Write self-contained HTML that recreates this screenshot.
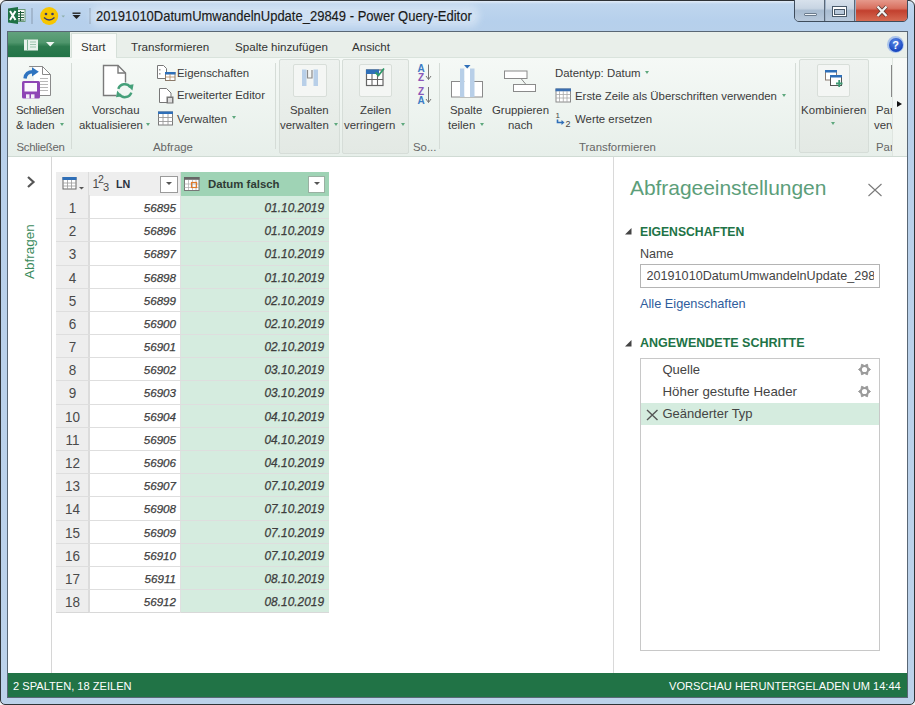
<!DOCTYPE html>
<html><head><meta charset="utf-8">
<style>
*{box-sizing:border-box;margin:0;padding:0}
html,body{width:915px;height:705px;overflow:hidden;background:#f4f4f4}
body{position:relative;font-family:"Liberation Sans",sans-serif;color:#444}
.a{position:absolute;white-space:nowrap}
#frame{left:0;top:0;width:915px;height:705px;border:1px solid #2f3337;border-radius:6px 6px 5px 5px;
 background:linear-gradient(#e2ecf7 0,#bfd6ee 3px,#b6d0ec 20px,#b8d0ea 40px,#bcd2ea 100%)}
#client{left:7px;top:31px;width:901px;height:667px;border:1px solid #596775;background:#fff}
.title{font-size:13px;color:#1a1a1a;left:96px;top:8.5px;line-height:16px;transform:scaleY(1.12);transform-origin:0 12.7px;-webkit-text-stroke:0.15px #1a1a1a}
.tab{font-size:11.6px;color:#333;top:40px}
.rt{font-size:11.4px;color:#3b3b3b;line-height:15px}
.gl{font-size:11.4px;color:#666;top:141px}
.sep{width:1px;background:#d5dcd7}
.dd{width:0;height:0;border-left:2.5px solid transparent;border-right:2.5px solid transparent;border-top:3px solid #5ea87d}
.gbox{border:1px solid #d6ddd8;border-radius:2px;background:linear-gradient(#eef2ef,#e3e9e4)}
.ibtn{border:1px solid #d8ded9;background:#f4f6f4;border-radius:2px}
.rn{font-size:13.5px;color:#4a4a4a;width:33px;text-align:center;left:56px;line-height:16px;transform:scaleY(1.1);transform-origin:0 12.5px}
.ln{font-size:11.6px;font-style:italic;color:#3d3d3d;line-height:14px;-webkit-text-stroke:0.25px #3d3d3d}
.dt{font-size:11.9px}
.hl{left:56px;width:272.5px;height:1px;background:#dedede}
.status{font-size:11.1px;color:#fff;top:680px}
</style></head><body>
<div id="frame" class="a"></div>
<!-- title bar -->
<svg class="a" style="left:0;top:0" width="100" height="30" viewBox="0 0 100 30">
 <rect x="16.5" y="9.5" width="8.5" height="12" fill="#f3f8f3" stroke="#6a9a7a"/>
 <path d="M18 12.5H24M18 15H24M18 17.5H24M18 20H24M20.5 11V21" stroke="#1f5c3a" stroke-width="1"/>
 <path d="M8 8.5L18 7V24L8 22.5Z" fill="#1e7145"/>
 <path d="M10 11L15.5 20M15.5 11L10 20" stroke="#fff" stroke-width="2"/>
 <rect x="31.5" y="8" width="1" height="16" fill="#8a9bb0"/>
 <circle cx="49.2" cy="16" r="9" fill="#f7c600"/>
 <circle cx="46" cy="14" r="1.3" fill="#3a3a6a"/><circle cx="52.5" cy="14" r="1.3" fill="#3a3a6a"/>
 <path d="M44 17.5Q49.2 22.5 54.5 17.5" fill="none" stroke="#3a3a6a" stroke-width="1.3"/>
 <path d="M61.5 15.5H65L63.2 17.5Z" fill="#8fb0a8"/>
 <rect x="72.5" y="12.5" width="8" height="1.4" fill="#222"/>
 <path d="M72.5 15H80.5L76.5 19Z" fill="#222"/>
 <rect x="89.5" y="8" width="1" height="16" fill="#8a9bb0"/>
</svg>
<div class="a" style="left:94px;top:9px;width:382px;height:14px;background:rgba(222,234,247,0.6);box-shadow:0 0 6px 4px rgba(222,234,247,0.6);border-radius:7px"></div>
<div class="a title">20191010DatumUmwandelnUpdate_29849 - Power Query-Editor</div>


<!-- window buttons -->
<div class="a" style="left:794px;top:-3px;width:114px;height:25px;border:1px solid #3e4c5c;border-radius:0 0 5px 5px;overflow:hidden;background:#9fb2c8">
 <div class="a" style="left:0;top:0;width:30px;height:23px;background:linear-gradient(#dbe4ee 0,#c8d5e3 45%,#a9bcd1 55%,#b8c9dc 100%);border-right:1px solid #5a6878"></div>
 <div class="a" style="left:31px;top:0;width:29px;height:23px;background:linear-gradient(#dbe4ee 0,#c8d5e3 45%,#a9bcd1 55%,#b8c9dc 100%);border-right:1px solid #5a6878"></div>
 <div class="a" style="left:61px;top:0;width:52px;height:23px;background:linear-gradient(#e9a396 0,#d8705f 45%,#c2402e 55%,#d66a52 100%)"></div>
</div>
<div class="a" style="left:804px;top:13px;width:13px;height:3px;background:#eef2f6;border:1px solid #6c7c8e;border-radius:1px"></div>
<div class="a" style="left:832px;top:6px;width:15px;height:11px;border:1px solid #4a5a6a;background:#fff"></div>
<div class="a" style="left:834px;top:9px;width:11px;height:6px;border:1px solid #4a5a6a;background:#b8c8da"></div>
<svg class="a" style="left:873px;top:3px" width="18" height="17"><path d="M4.5 3.5L13.5 13M13.5 3.5L4.5 13" stroke="#5a3a34" stroke-width="3.8"/><path d="M4.5 3.5L13.5 13M13.5 3.5L4.5 13" stroke="#f4f4f4" stroke-width="2.3"/></svg>

<div id="client" class="a"></div>
<!-- tab bar -->
<div class="a" style="left:8px;top:32px;width:899px;height:25px;background:#e9efea"></div>
<div class="a" style="left:8px;top:32px;width:62px;height:24.5px;background:linear-gradient(#62a27d 0,#4f966c 42%,#2d7b4f 58%,#237447 100%)"></div>
<div class="a" style="left:71px;top:33px;width:46px;height:25px;background:#f8faf8;border:1px solid #d6e0d9;border-bottom:none"></div>
<svg class="a" style="left:8px;top:32px" width="62" height="24"><rect x="16" y="7.5" width="14" height="11" fill="#e8f2ec"/><path d="M19.5 8V18" stroke="#7fb396" stroke-width="1"/><path d="M22 10H28M22 12.5H28M22 15H28" stroke="#9cc5ae" stroke-width="1"/><path d="M38 10H46.5L42.25 14.5Z" fill="#eef6f1"/></svg>
<div class="a tab" style="left:81px">Start</div>
<div class="a tab" style="left:131px">Transformieren</div>
<div class="a tab" style="left:235px">Spalte hinzufügen</div>
<div class="a tab" style="left:352px">Ansicht</div>
<div class="a" style="left:887px;top:36px;width:17px;height:17px;border-radius:50%;background:#a9c3ea"></div><div class="a" style="left:888.5px;top:37.5px;width:14px;height:14px;border-radius:50%;background:radial-gradient(circle at 45% 30%,#5a8ae8,#1a48c0 70%);color:#fff;font-size:11px;font-weight:bold;text-align:center;line-height:14px">?</div>

<!-- ribbon -->
<div class="a" style="left:8px;top:57px;width:899px;height:99.5px;background:linear-gradient(#f5f9f6,#e7efea);border-top:1px solid #d9e3dc;border-bottom:1px solid #d0dbd4"></div>


<div class="a" style="left:72px;top:56px;width:44px;height:3px;background:#f8faf8"></div>
<!-- ribbon contents -->
<div class="a sep" style="left:71px;top:63px;height:86px"></div>
<div class="a sep" style="left:275px;top:63px;height:86px"></div>
<div class="a sep" style="left:439px;top:63px;height:86px"></div>
<div class="a sep" style="left:795px;top:63px;height:86px"></div>
<div class="a gbox" style="left:279px;top:59px;width:61px;height:95px"></div>
<div class="a gbox" style="left:342px;top:59px;width:67px;height:95px"></div>
<div class="a gbox" style="left:799px;top:59px;width:70px;height:94px"></div>
<div class="a ibtn" style="left:293px;top:64px;width:34px;height:33px"></div>
<div class="a ibtn" style="left:359px;top:64px;width:33px;height:33px"></div>
<div class="a ibtn" style="left:817px;top:64px;width:33px;height:33px"></div>

<div class="a rt" style="left:16px;top:103px;letter-spacing:-0.3px">Schließen</div>
<div class="a rt" style="left:16px;top:118px">&amp; laden</div>
<div class="a dd" style="left:60px;top:123px"></div>
<div class="a gl" style="left:16.5px;letter-spacing:-0.3px">Schließen</div>

<div class="a rt" style="left:92px;top:103px">Vorschau</div>
<div class="a rt" style="left:79px;top:118px">aktualisieren</div>
<div class="a dd" style="left:146px;top:123px"></div>
<div class="a rt" style="left:177px;top:65.5px">Eigenschaften</div>
<div class="a rt" style="left:177px;top:88px">Erweiterter Editor</div>
<div class="a rt" style="left:177px;top:111.5px">Verwalten</div>
<div class="a dd" style="left:232px;top:116px"></div>
<div class="a gl" style="left:153px">Abfrage</div>

<div class="a rt" style="left:290px;top:103px">Spalten</div>
<div class="a rt" style="left:280px;top:118px">verwalten</div>
<div class="a dd" style="left:334px;top:123px"></div>
<div class="a rt" style="left:360px;top:103px">Zeilen</div>
<div class="a rt" style="left:344px;top:118px">verringern</div>
<div class="a dd" style="left:401px;top:123px"></div>
<div class="a gl" style="left:413px">So...</div>

<div class="a rt" style="left:450px;top:103px">Spalte</div>
<div class="a rt" style="left:448px;top:118px">teilen</div>
<div class="a dd" style="left:480px;top:123px"></div>
<div class="a rt" style="left:492px;top:103px">Gruppieren</div>
<div class="a rt" style="left:508px;top:118px">nach</div>
<div class="a rt" style="left:555px;top:66px">Datentyp: Datum</div>
<div class="a dd" style="left:645px;top:71px"></div>
<div class="a rt" style="left:575px;top:88.5px">Erste Zeile als Überschriften verwenden</div>
<div class="a dd" style="left:782px;top:94px"></div>
<div class="a rt" style="left:575px;top:111.5px">Werte ersetzen</div>
<div class="a gl" style="left:579px">Transformieren</div>

<div class="a rt" style="left:801px;top:103px;letter-spacing:0.15px">Kombinieren</div>
<div class="a dd" style="left:831px;top:122px"></div>
<div class="a" style="left:873px;top:57px;width:19px;height:99px;overflow:hidden">
 <div class="a rt" style="left:3px;top:46px">Par</div>
 <div class="a rt" style="left:1px;top:61px">verwalten</div>
 <div class="a gl" style="left:3px;top:84px">Par</div>
 <div class="a" style="left:18px;top:8px;width:2px;height:32px;border-left:1px solid #888"></div>
</div>
<div class="a" style="left:892px;top:58px;width:15px;height:98px;background:linear-gradient(#f8faf8,#eef3ef);border-left:1px solid #dfe5e0"></div>
<div class="a" style="left:897px;top:101px;width:0;height:0;border-top:3.5px solid transparent;border-bottom:3.5px solid transparent;border-left:5px solid #111"></div>


<svg class="a" style="left:0;top:0" width="915" height="705" viewBox="0 0 915 705">
 <!-- Schliessen icon -->
 <path d="M29.5 66.5H42.5L50.5 74.5V95.5H29.5Z" fill="#fff" stroke="#8a8a8a"/>
 <rect x="28" y="67" width="6" height="14" fill="#f1f5f1"/>
 <path d="M42.5 66.5V74.5H50.5" fill="none" stroke="#8a8a8a"/>
 <g stroke="#b8b8b8"><path d="M40 78.5H48M40 81.5H48M40 84.5H48M40 87.5H48M40 90.5H48"/></g>
 <rect x="22" y="81" width="18" height="17.5" rx="1.5" fill="#8e44b5"/>
 <rect x="24.5" y="83" width="12.5" height="8.5" fill="#fbf8fd"/>
 <rect x="26" y="94.3" width="3.5" height="4.2" fill="#f4eef8"/><rect x="31" y="94.3" width="3.5" height="4.2" fill="#f4eef8"/>
 <path d="M29.5 66.5H42.5" stroke="#8a8a8a"/>
 <path d="M25 78.5C25.5 74 28.5 71.8 33 71.8" fill="none" stroke="#2f74c0" stroke-width="3.4"/>
 <path d="M32 67.2L38.8 71.8L32 76.4Z" fill="#2f74c0"/>
 <!-- Vorschau icon -->
 <path d="M103.5 65.5H118L125.5 73V83C120 83 116.5 88 116.5 95.5H103.5Z" fill="#fff"/>
 <path d="M116.5 95.5H103.5V65.5H118L125.5 73V82.5" fill="none" stroke="#7a7a7a" stroke-width="1.4"/>
 <path d="M118 65.5V73H125.5" fill="none" stroke="#7a7a7a" stroke-width="1.4"/>
 <path d="M118.3 88.8A6.8 6.8 0 0 1 130.3 87.2" fill="none" stroke="#45a07a" stroke-width="2.5"/>
 <path d="M127.2 85.2L133.6 84.2L132.4 90.6Z" fill="#45a07a"/>
 <path d="M131.3 92.6A6.8 6.8 0 0 1 119.3 94.2" fill="none" stroke="#45a07a" stroke-width="2.5"/>
 <path d="M122.4 96.2L116 97.2L117.2 90.8Z" fill="#45a07a"/>
 <!-- Eigenschaften icon -->
 <path d="M157.5 65.5H163.5L166.5 68.5V78.5H157.5Z" fill="#fff" stroke="#777"/>
 <g fill="#999"><rect x="159" y="69" width="1.5" height="1.5"/><rect x="159" y="73" width="1.5" height="1.5"/></g>
 <rect x="165.5" y="72.5" width="9.5" height="8" fill="#fff" stroke="#8a7a6a"/>
 <rect x="165" y="72" width="10.5" height="2.5" fill="#2f6fb8"/>
 <path d="M165.5 77H175M170 74V80.5" stroke="#b08860" stroke-width="0.8"/>
 <!-- Editor icon -->
 <path d="M159.5 88.5H166.5L171 93V102.5H159.5Z" fill="#fff" stroke="#777"/>
 <rect x="166.5" y="96.5" width="7" height="7" fill="#777"/><rect x="168" y="98" width="4" height="4.5" fill="#ddd"/>
 <!-- Verwalten icon -->
 <rect x="158.5" y="112" width="14" height="13" fill="#fff" stroke="#7a7a7a"/>
 <rect x="158" y="111.5" width="15" height="2.5" fill="#2f6fb8"/>
 <path d="M158.5 117.5H172.5M158.5 121.5H172.5M163 114V125M168 114V125" stroke="#9a9a9a" stroke-width="0.9"/>
 <!-- Spalten verwalten icon -->
 <rect x="302" y="69.5" width="4.5" height="16.5" fill="#b8cfe8"/>
 <rect x="313.5" y="69.5" width="4.5" height="16.5" fill="#b8cfe8"/>
 <path d="M307.5 70V78H312V70" fill="none" stroke="#8a8a8a" stroke-width="1.2"/>
 <!-- Zeilen verringern icon -->
 <rect x="366.5" y="70" width="16.5" height="15.5" fill="#fff" stroke="#666" stroke-width="1.2"/>
 <rect x="366" y="69.5" width="13" height="4.5" fill="#2f6fb8"/>
 <path d="M366.5 79.5H383M372 74V85.5M377.5 74V85.5" stroke="#666" stroke-width="1.1"/>
 <path d="M375.5 72.5L378.5 75.5L384 68.5" fill="none" stroke="#2f9a6a" stroke-width="1.8"/>
 <!-- sort icons -->
 <text x="417.5" y="72" font-family="Liberation Sans" font-weight="bold" font-size="10" fill="#3c7cc4">A</text>
 <text x="418" y="80.5" font-family="Liberation Sans" font-weight="bold" font-size="10" fill="#8a56b8">Z</text>
 <text x="418" y="94.5" font-family="Liberation Sans" font-weight="bold" font-size="10" fill="#8a56b8">Z</text>
 <text x="417.5" y="103.5" font-family="Liberation Sans" font-weight="bold" font-size="10" fill="#3c7cc4">A</text>
 <path d="M428.5 64.5V79.5M426 76L428.5 79.5L431 76M428.5 87V102.5M426 99L428.5 102.5L431 99" fill="none" stroke="#777" stroke-width="1"/>
 <!-- Spalte teilen -->
 <rect x="451.5" y="81.5" width="31" height="15.5" fill="#fff" stroke="#8a8a8a"/>
 <rect x="460" y="68.5" width="4.5" height="28.5" fill="#b8cfe8"/>
 <rect x="470" y="68.5" width="4.5" height="28.5" fill="#b8cfe8"/>
 <rect x="464.5" y="68.5" width="5.5" height="28.5" fill="#fff"/>
 <path d="M464 65H470.5L467.2 68.5Z" fill="#2f6fb8"/>
 <!-- Gruppieren -->
 <rect x="504.5" y="71" width="22.5" height="7.5" fill="#fff" stroke="#8a8a8a"/>
 <rect x="513.5" y="84.5" width="22" height="7" fill="#fff" stroke="#8a8a8a"/>
 <path d="M521 78.5L526 84.5" stroke="#8a8a8a"/>
 <!-- Erste Zeile calendar -->
 <rect x="556" y="89" width="14.5" height="13" fill="#fff" stroke="#8a8a8a"/>
 <rect x="555.5" y="88.5" width="15.5" height="2.8" fill="#3b6fb0"/>
 <path d="M556 94.5H570.5M556 98H570.5M559.5 91V102M563.3 91V102M567 91V102" stroke="#a8a8a8" stroke-width="0.8"/>
 <!-- 1->2 -->
 <text x="555.5" y="117.5" font-family="Liberation Sans" font-size="8" fill="#444">1</text>
 <text x="565.5" y="126.5" font-family="Liberation Sans" font-size="9" fill="#444">2</text>
 <path d="M557.5 119.5V122.5H562.5" fill="none" stroke="#2f6fb8" stroke-width="1.6"/>
 <path d="M561.5 120L564.5 122.5L561.5 125Z" fill="#2f6fb8"/>
 <!-- Kombinieren -->
 <rect x="825.5" y="70.5" width="11" height="9.5" fill="#fff" stroke="#8a7a70"/>
 <rect x="825" y="70" width="12" height="2.5" fill="#2f6fb8"/>
 <rect x="830.5" y="75.5" width="11" height="10" fill="#fff" stroke="#555"/>
 <rect x="830" y="75" width="12" height="2.5" fill="#2f6fb8"/>
 <path d="M836 83.5H842.5M839.2 80V87" stroke="#3d9a73" stroke-width="1.8"/>
</svg>


<!-- left nav -->
<div class="a" style="left:51px;top:157px;width:1px;height:516px;background:#d6d6d6"></div>
<svg class="a" style="left:25px;top:175px" width="12" height="14"><path d="M3 2L8.5 7L3 12" fill="none" stroke="#555" stroke-width="2.2"/></svg>
<div class="a" style="left:23px;top:279px;font-size:13.5px;color:#3a8a5c;transform-origin:0 0;transform:rotate(-90deg);line-height:14px">Abfragen</div>
<!-- table -->
<div class="a" style="left:56px;top:172px;width:272.5px;height:441px;background:#fff"></div>
<div class="a" style="left:56px;top:172px;width:33px;height:441px;background:#eeeeee;border-right:1px solid #dcdcdc"></div>
<div class="a" style="left:89px;top:172px;width:92px;height:23.5px;background:#eeeeee;border-right:1px solid #dcdcdc"></div>
<div class="a" style="left:181px;top:172px;width:147.5px;height:441px;background:#d5ecdf"></div>
<div class="a" style="left:181px;top:172px;width:147.5px;height:23.5px;background:#9fd3b5"></div>
<div class="a" style="left:56px;top:612px;width:272.5px;height:1px;background:#d8d8d8"></div>
<div class="a" style="left:89px;top:195px;width:1px;height:418px;background:#dcdcdc"></div>
<div class="a" style="left:180px;top:195px;width:1px;height:418px;background:#e0e0e0"></div>
<div class="a rn" style="top:201.00px">1</div><div class="a ln" style="top:201.00px;right:739px">56895</div><div class="a ln dt" style="top:201.00px;right:591px">01.10.2019</div>
<div class="a hl" style="top:218.18px"></div>
<div class="a rn" style="top:224.18px">2</div><div class="a ln" style="top:224.18px;right:739px">56896</div><div class="a ln dt" style="top:224.18px;right:591px">01.10.2019</div>
<div class="a hl" style="top:241.36px"></div>
<div class="a rn" style="top:247.36px">3</div><div class="a ln" style="top:247.36px;right:739px">56897</div><div class="a ln dt" style="top:247.36px;right:591px">01.10.2019</div>
<div class="a hl" style="top:264.54px"></div>
<div class="a rn" style="top:270.54px">4</div><div class="a ln" style="top:270.54px;right:739px">56898</div><div class="a ln dt" style="top:270.54px;right:591px">01.10.2019</div>
<div class="a hl" style="top:287.72px"></div>
<div class="a rn" style="top:293.72px">5</div><div class="a ln" style="top:293.72px;right:739px">56899</div><div class="a ln dt" style="top:293.72px;right:591px">02.10.2019</div>
<div class="a hl" style="top:310.90px"></div>
<div class="a rn" style="top:316.90px">6</div><div class="a ln" style="top:316.90px;right:739px">56900</div><div class="a ln dt" style="top:316.90px;right:591px">02.10.2019</div>
<div class="a hl" style="top:334.08px"></div>
<div class="a rn" style="top:340.08px">7</div><div class="a ln" style="top:340.08px;right:739px">56901</div><div class="a ln dt" style="top:340.08px;right:591px">02.10.2019</div>
<div class="a hl" style="top:357.26px"></div>
<div class="a rn" style="top:363.26px">8</div><div class="a ln" style="top:363.26px;right:739px">56902</div><div class="a ln dt" style="top:363.26px;right:591px">03.10.2019</div>
<div class="a hl" style="top:380.44px"></div>
<div class="a rn" style="top:386.44px">9</div><div class="a ln" style="top:386.44px;right:739px">56903</div><div class="a ln dt" style="top:386.44px;right:591px">03.10.2019</div>
<div class="a hl" style="top:403.62px"></div>
<div class="a rn" style="top:409.62px">10</div><div class="a ln" style="top:409.62px;right:739px">56904</div><div class="a ln dt" style="top:409.62px;right:591px">04.10.2019</div>
<div class="a hl" style="top:426.80px"></div>
<div class="a rn" style="top:432.80px">11</div><div class="a ln" style="top:432.80px;right:739px">56905</div><div class="a ln dt" style="top:432.80px;right:591px">04.10.2019</div>
<div class="a hl" style="top:449.98px"></div>
<div class="a rn" style="top:455.98px">12</div><div class="a ln" style="top:455.98px;right:739px">56906</div><div class="a ln dt" style="top:455.98px;right:591px">04.10.2019</div>
<div class="a hl" style="top:473.16px"></div>
<div class="a rn" style="top:479.16px">13</div><div class="a ln" style="top:479.16px;right:739px">56907</div><div class="a ln dt" style="top:479.16px;right:591px">07.10.2019</div>
<div class="a hl" style="top:496.34px"></div>
<div class="a rn" style="top:502.34px">14</div><div class="a ln" style="top:502.34px;right:739px">56908</div><div class="a ln dt" style="top:502.34px;right:591px">07.10.2019</div>
<div class="a hl" style="top:519.52px"></div>
<div class="a rn" style="top:525.52px">15</div><div class="a ln" style="top:525.52px;right:739px">56909</div><div class="a ln dt" style="top:525.52px;right:591px">07.10.2019</div>
<div class="a hl" style="top:542.70px"></div>
<div class="a rn" style="top:548.70px">16</div><div class="a ln" style="top:548.70px;right:739px">56910</div><div class="a ln dt" style="top:548.70px;right:591px">07.10.2019</div>
<div class="a hl" style="top:565.88px"></div>
<div class="a rn" style="top:571.88px">17</div><div class="a ln" style="top:571.88px;right:739px">56911</div><div class="a ln dt" style="top:571.88px;right:591px">08.10.2019</div>
<div class="a hl" style="top:589.06px"></div>
<div class="a rn" style="top:595.06px">18</div><div class="a ln" style="top:595.06px;right:739px">56912</div><div class="a ln dt" style="top:595.06px;right:591px">08.10.2019</div>
<div class="a" style="left:92.5px;top:176px;font-size:12px;color:#4a4a4a;line-height:16px;transform:scaleY(1.1);transform-origin:0 12px">1</div>
<div class="a" style="left:98px;top:173px;font-size:10.5px;color:#4a4a4a;line-height:12px">2</div>
<div class="a" style="left:103px;top:181px;font-size:11px;color:#4a4a4a;line-height:12px">3</div>
<div class="a" style="left:116px;top:177px;font-size:10.7px;font-weight:bold;color:#2a3340;line-height:14px">LN</div>
<div class="a" style="left:160px;top:175.5px;width:18px;height:17px;background:#fff;border:1px solid #9a9a9a"></div>
<div class="a" style="left:166px;top:182px;width:0;height:0;border-left:3px solid transparent;border-right:3px solid transparent;border-top:3.5px solid #555"></div>
<div class="a" style="left:208px;top:177px;font-size:11.4px;font-weight:bold;color:#2f3b35;line-height:14px">Datum falsch</div>
<div class="a" style="left:308px;top:175.5px;width:17px;height:17px;background:#fff;border:1px solid #9ab0a2"></div>
<div class="a" style="left:313.5px;top:182px;width:0;height:0;border-left:3px solid transparent;border-right:3px solid transparent;border-top:3.5px solid #555"></div>
<svg class="a" style="left:0;top:0" width="340" height="200" viewBox="0 0 340 200">
 <rect x="63" y="177.5" width="13" height="11.5" fill="#fff" stroke="#666"/>
 <rect x="62.5" y="177" width="14" height="3" fill="#2f6fb8"/>
 <path d="M63 183H76M63 186H76M67.5 180V189M71.5 180V189" stroke="#999" stroke-width="0.8"/>
 <path d="M79 187H84L81.5 189.5Z" fill="#555"/>
 <rect x="184.5" y="177.5" width="14.5" height="13" fill="#fff" stroke="#777"/>
 <rect x="184" y="177" width="15.5" height="2.8" fill="#666"/>
 <path d="M184.5 184H199M184.5 187.5H199M188.5 180V190M192.5 180V190M196 180V190" stroke="#aaa" stroke-width="0.7"/>
 <rect x="191.5" y="182.5" width="5" height="5" fill="none" stroke="#e07a2a" stroke-width="1.2"/>
</svg>

<!-- right panel -->
<div class="a" style="left:613px;top:157px;width:1px;height:516px;background:#d9d9d9"></div>
<div class="a" style="left:630px;top:176px;font-size:21px;color:#5c9e7a;line-height:24px;letter-spacing:-0.05px">Abfrageeinstellungen</div>
<svg class="a" style="left:866px;top:182px" width="18" height="16"><path d="M2.5 2L15.5 14M15.5 2L2.5 14" stroke="#7a7a7a" stroke-width="1.1"/></svg>
<svg class="a" style="left:622px;top:225px" width="12" height="12"><path d="M9.5 3V9.5H3Z" fill="#444"/></svg>
<div class="a" style="left:640px;top:223.5px;font-size:12.2px;font-weight:bold;color:#217346;line-height:16px">EIGENSCHAFTEN</div>
<div class="a" style="left:640px;top:246px;font-size:12.6px;color:#444;line-height:16px">Name</div>
<div class="a" style="left:639.5px;top:263.5px;width:240.5px;height:24.5px;border:1px solid #b4b4b4;background:#fff"></div>
<div class="a" style="left:646.5px;top:265px;width:227px;height:21px;overflow:hidden">
 <div class="a" style="left:0;top:2.5px;font-size:12.6px;color:#444;line-height:16px;letter-spacing:0.02px">20191010DatumUmwandelnUpdate_29849</div>
</div>
<div class="a" style="left:640px;top:296px;font-size:12.75px;color:#2e5c9c;line-height:16px">Alle Eigenschaften</div>
<svg class="a" style="left:622px;top:337px" width="12" height="12"><path d="M9.5 3V9.5H3Z" fill="#444"/></svg>
<div class="a" style="left:640px;top:335px;font-size:12.5px;font-weight:bold;color:#217346;line-height:16px">ANGEWENDETE SCHRITTE</div>
<div class="a" style="left:639.5px;top:357.5px;width:240.5px;height:293px;border:1px solid #c8c8c8;background:#fff"></div>
<div class="a" style="left:640.5px;top:402.5px;width:238.5px;height:22px;background:#d5ecdf"></div>
<div class="a" style="left:662.5px;top:362px;font-size:13px;color:#444;line-height:16px">Quelle</div>
<div class="a" style="left:662.5px;top:384px;font-size:13.3px;color:#444;line-height:16px">Höher gestufte Header</div>
<div class="a" style="left:662.5px;top:406px;font-size:13px;color:#444;line-height:16px">Geänderter Typ</div>
<svg class="a" style="left:645px;top:407px" width="14" height="14"><path d="M2 3L12.5 13M12.5 3L2 13" stroke="#555" stroke-width="1.4"/></svg>
<svg class="a" style="left:0;top:0" width="915" height="705" viewBox="0 0 915 705" style="pointer-events:none">
 <g id="gear"><polygon points="870.50,369.50 867.96,367.50 867.50,364.30 864.50,365.50 861.50,364.30 861.04,367.50 858.50,369.50 861.04,371.50 861.50,374.70 864.50,373.50 867.50,374.70 867.96,371.50" fill="#9a9a9a" stroke="#9a9a9a" stroke-width="1" stroke-linejoin="round"/><circle cx="864.5" cy="369.5" r="2.6" fill="#fff"/></g>
 <use href="#gear" y="22"/>
</svg>

<!-- status -->
<div class="a" style="left:8px;top:673px;width:899px;height:24px;background:#217346"></div>
<div class="a status" style="left:13px">2 SPALTEN, 18 ZEILEN</div>
<div class="a status" style="left:669px">VORSCHAU HERUNTERGELADEN UM 14:44</div>
</body></html>
